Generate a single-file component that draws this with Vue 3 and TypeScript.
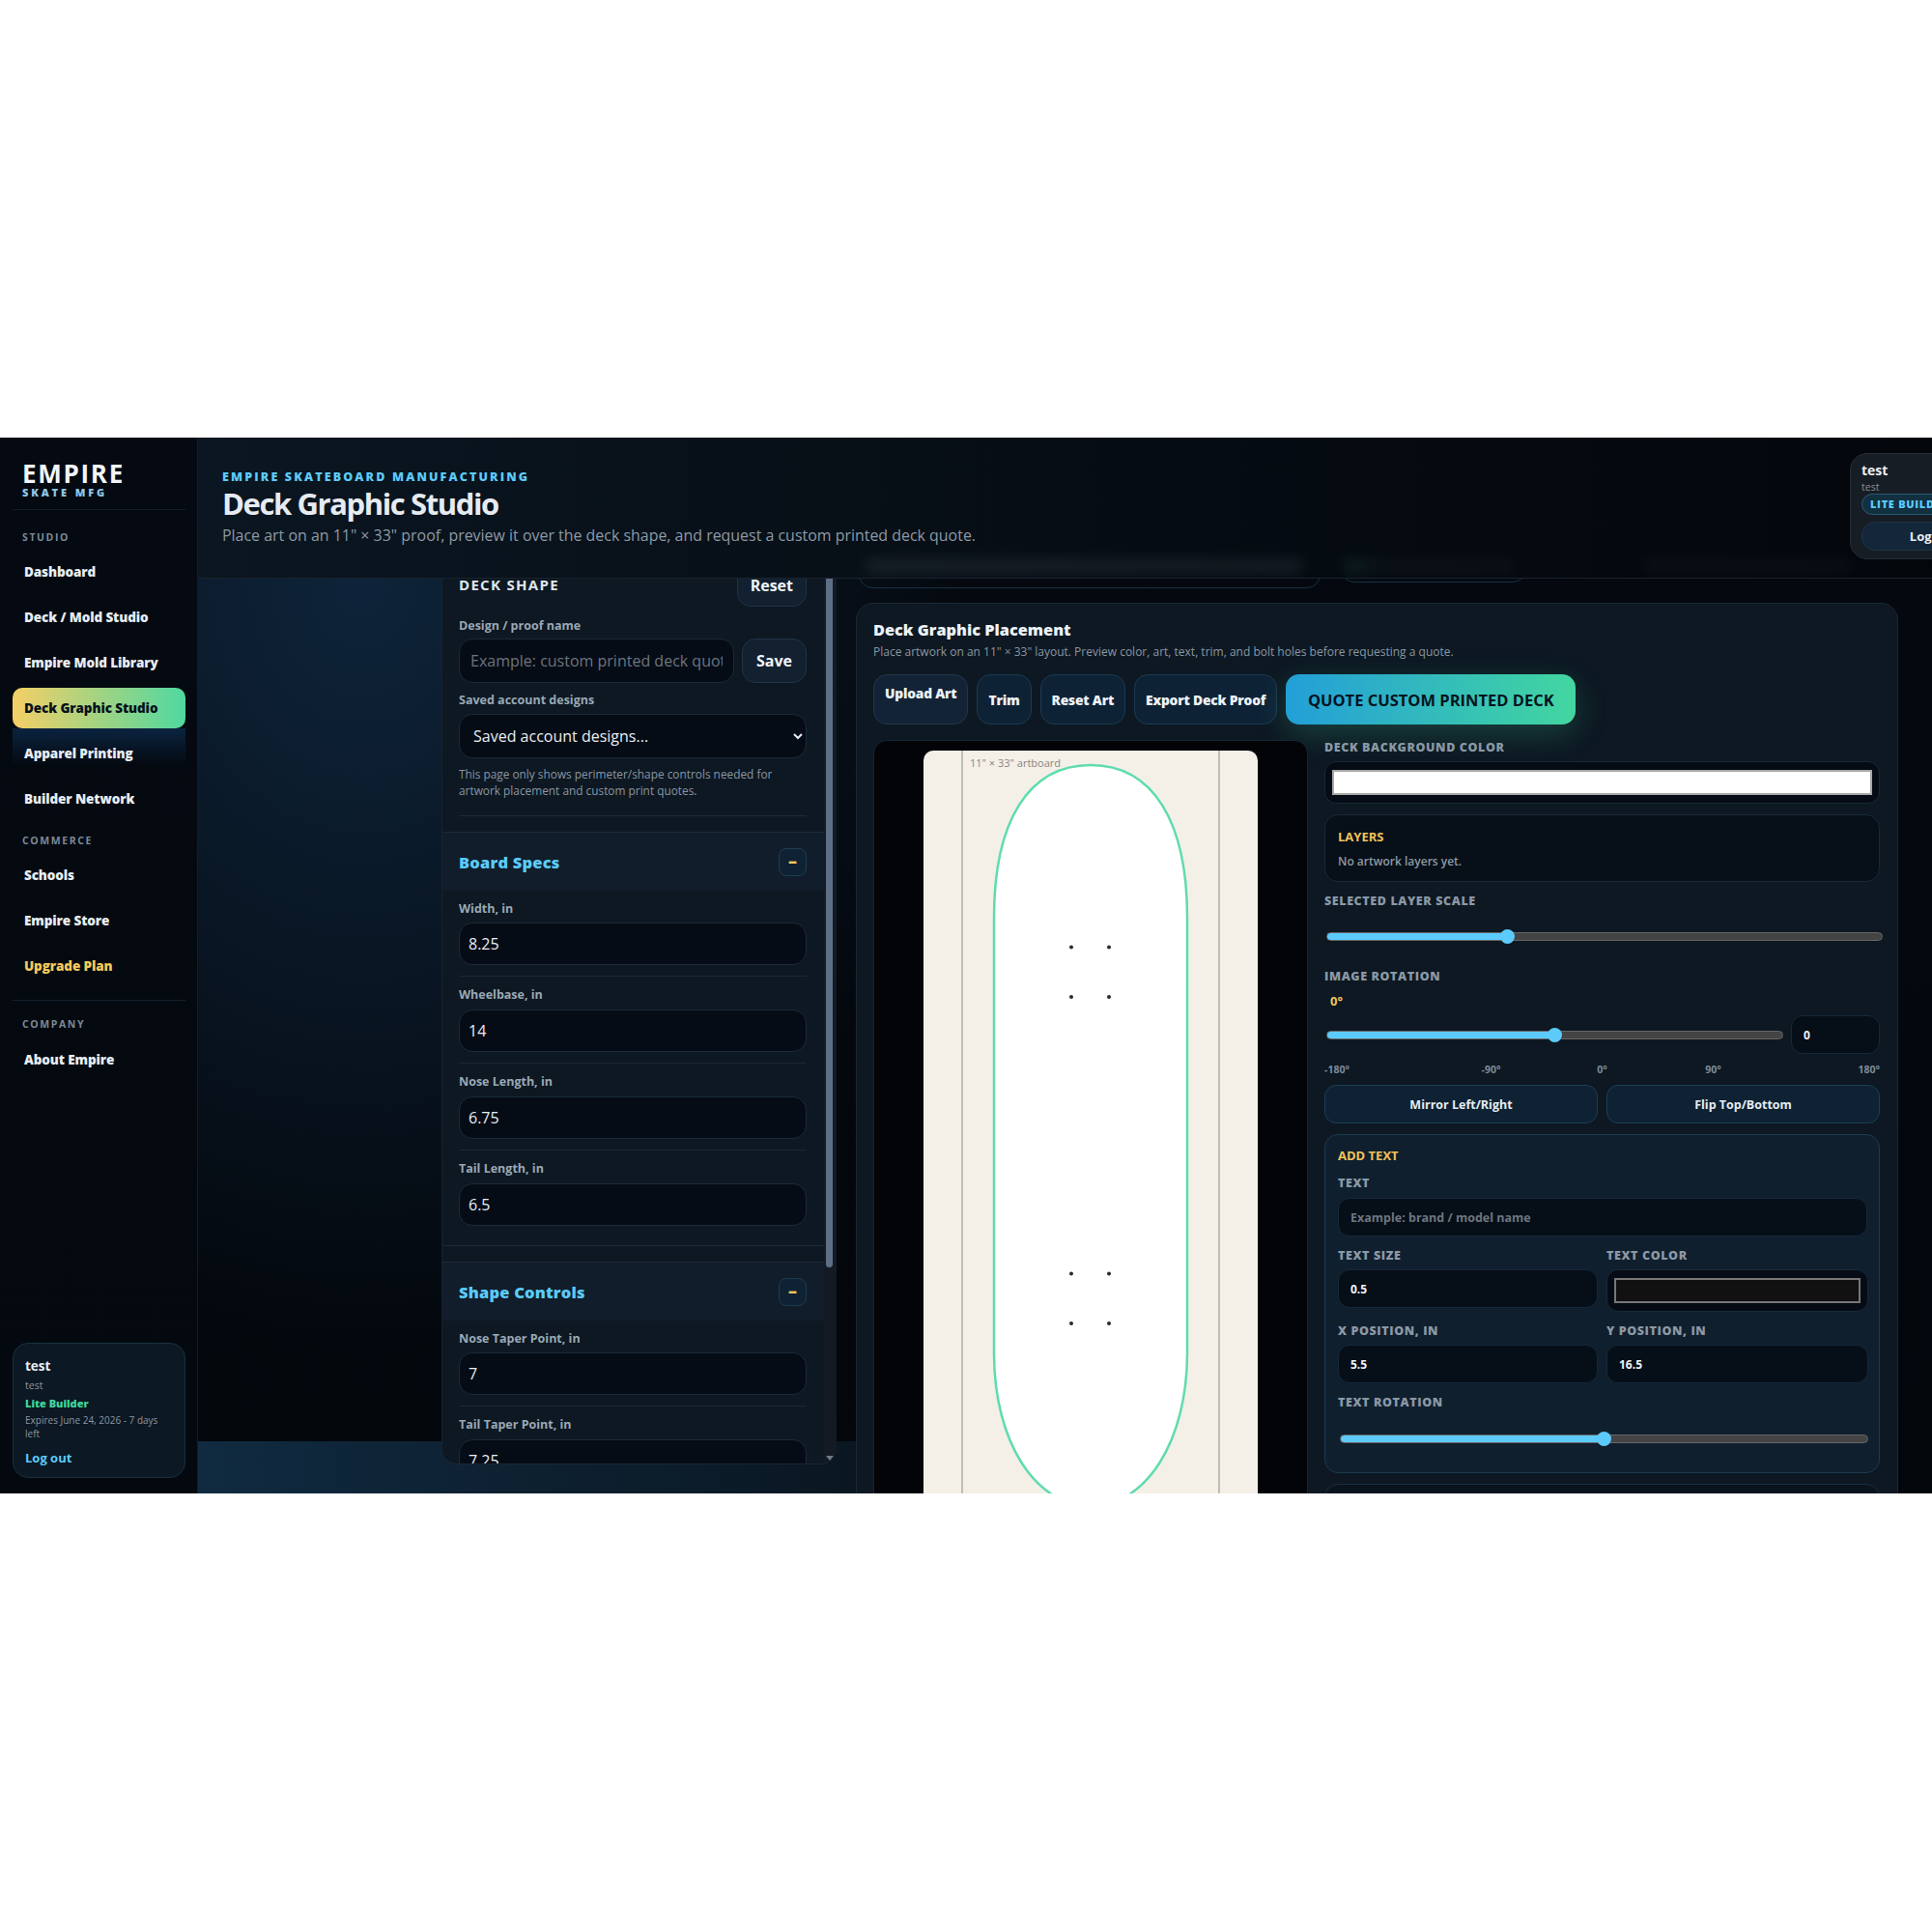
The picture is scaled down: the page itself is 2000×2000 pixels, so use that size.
<script setup lang="ts">
interface NavGroup {
  label: string
  items: Array<{ name: string; active?: boolean; upgrade?: boolean }>
}

const navGroups: NavGroup[] = [
  {
    label: 'STUDIO',
    items: [
      { name: 'Dashboard' },
      { name: 'Deck / Mold Studio' },
      { name: 'Empire Mold Library' },
      { name: 'Deck Graphic Studio', active: true },
      { name: 'Apparel Printing' },
      { name: 'Builder Network' }
    ]
  },
  {
    label: 'COMMERCE',
    items: [{ name: 'Schools' }, { name: 'Empire Store' }, { name: 'Upgrade Plan', upgrade: true }]
  }
]

const sections = [
  {
    title: 'Board Specs',
    fields: [
      { label: 'Width, in', value: '8.25' },
      { label: 'Wheelbase, in', value: '14' },
      { label: 'Nose Length, in', value: '6.75' },
      { label: 'Tail Length, in', value: '6.5' }
    ]
  },
  {
    title: 'Shape Controls',
    fields: [
      { label: 'Nose Taper Point, in', value: '7' },
      { label: 'Tail Taper Point, in', value: '7.25' }
    ]
  }
]

const actions = ['Upload Art', 'Trim', 'Reset Art', 'Export Deck Proof']
const ticks = ['-180°', '-90°', '0°', '90°', '180°']
const holes = [
  [1110, 979.5],
  [1149, 979.5],
  [1110, 1031],
  [1149, 1031],
  [1110, 1317.5],
  [1149, 1317.5],
  [1110, 1369],
  [1149, 1369]
]

function fill(pct: number) {
  return { '--fill': `${pct}%` }
}
</script>

<template>
  <div class="page">
    <div class="shell">
      <aside class="sidebar">
        <div class="brand">
          <div class="brand-name">EMPIRE</div>
          <div class="brand-sub">SKATE MFG</div>
        </div>
        <nav>
          <div v-for="g in navGroups" :key="g.label" class="nav-group">
            <div class="nav-label">{{ g.label }}</div>
            <a
              v-for="item in g.items"
              :key="item.name"
              class="nav-item"
              :class="{ active: item.active, upgrade: item.upgrade }"
            >{{ item.name }}</a>
          </div>
          <div class="nav-company">
            <div class="nav-label">COMPANY</div>
            <a class="nav-item">About Empire</a>
          </div>
        </nav>
        <div class="user-card">
          <div class="user-name">test</div>
          <div class="user-sub">test</div>
          <div class="user-plan">Lite Builder</div>
          <div class="user-exp">Expires June 24, 2026 - 7 days left</div>
          <a class="user-out">Log out</a>
        </div>
      </aside>

      <main class="main">
        <header class="topbar">
          <div class="eyebrow">EMPIRE SKATEBOARD MANUFACTURING</div>
          <h1>Deck Graphic Studio</h1>
          <p>Place art on an 11" × 33" proof, preview it over the deck shape, and request a custom printed deck quote.</p>
          <div class="smear smear-a"></div>
          <div class="smear smear-b"></div>
          <div class="smear smear-c"></div>
          <div class="account">
            <div class="account-name">test</div>
            <div class="account-sub">test</div>
            <div class="account-pill">LITE BUILDER</div>
            <button type="button" class="account-btn">Log out</button>
          </div>
        </header>

        <div class="workspace">
          <section class="shape-panel">
            <div class="shape-scroll">
              <div class="shape-top">
                <div class="shape-head">
                  <h2>DECK SHAPE</h2>
                  <button type="button" class="soft-btn">Reset</button>
                </div>
                <label class="field-label name-label">Design / proof name</label>
                <div class="name-row">
                  <input class="dark-input name-input" placeholder="Example: custom printed deck quote" />
                  <button type="button" class="soft-btn">Save</button>
                </div>
                <label class="field-label saved-label">Saved account designs</label>
                <select class="dark-input saved-select">
                  <option>Saved account designs...</option>
                </select>
                <div class="help">
                  <p>This page only shows perimeter/shape controls needed for artwork placement and custom print quotes.</p>
                </div>
              </div>

              <div v-for="s in sections" :key="s.title" class="spec-section">
                <div class="spec-head">
                  <h3>{{ s.title }}</h3>
                  <button type="button" class="collapse">–</button>
                </div>
                <div v-for="f in s.fields" :key="f.label" class="spec-field">
                  <label class="field-label">{{ f.label }}</label>
                  <input class="dark-input spec-input" :value="f.value" />
                </div>
              </div>
            </div>
            <div class="scrollbar">
              <div class="scroll-thumb"></div>
              <div class="scroll-arrow"></div>
            </div>
          </section>

          <div class="right-col">
            <div class="status-row">
              <div class="status-card status-a"></div>
              <div class="status-card status-b"></div>
            </div>
            <section class="placement">
              <h2>Deck Graphic Placement</h2>
              <p class="placement-sub">Place artwork on an 11" × 33" layout. Preview color, art, text, trim, and bolt holes before requesting a quote.</p>
              <div class="action-row">
                <button v-for="(a, i) in actions" :key="a" type="button" class="action-btn" :class="{ first: i === 0 }">{{ a }}</button>
                <button type="button" class="quote-btn">QUOTE CUSTOM PRINTED DECK</button>
              </div>

              <div class="placement-grid">
                <div class="preview">
                  <div class="artboard">
                    <svg class="art-svg" viewBox="957 776 346 770" width="346" height="770">
                      <line x1="997" y1="776" x2="997" y2="1546" stroke="#8f8b84" stroke-width="1" />
                      <line x1="1263" y1="776" x2="1263" y2="1546" stroke="#8f8b84" stroke-width="1" />
                      <text x="1005" y="793" class="art-label">11" × 33" artboard</text>
                      <path
                        d="M1030 949C1030 850 1065 791 1130 791C1195 791 1230 850 1230 949V1400C1230 1490 1188 1558 1130 1558C1072 1558 1030 1490 1030 1400Z"
                        fill="#fff"
                        stroke="#5fdcae"
                        stroke-width="2.5"
                      />
                      <circle v-for="(h, i) in holes" :key="i" :cx="h[0]" :cy="h[1]" r="2" fill="#2a2a2e" />
                    </svg>
                  </div>
                </div>

                <div class="controls">
                  <label class="caps">DECK BACKGROUND COLOR</label>
                  <div class="color-well"><div class="swatch swatch-white"></div></div>

                  <div class="layers">
                    <div class="gold">LAYERS</div>
                    <div class="layers-empty">No artwork layers yet.</div>
                  </div>

                  <label class="caps scale-label">SELECTED LAYER SCALE</label>
                  <input class="range scale-range" type="range" min="0" max="100" value="32" :style="fill(32.4)" />

                  <label class="caps rotation-label">IMAGE ROTATION</label>
                  <div class="gold rotation-value">0°</div>
                  <div class="rotation-row">
                    <input class="range" type="range" min="-180" max="180" value="0" :style="fill(50)" />
                    <input class="num-input rotation-num" value="0" />
                  </div>
                  <div class="ticks">
                    <span v-for="t in ticks" :key="t">{{ t }}</span>
                  </div>
                  <div class="mirror-row">
                    <button type="button" class="mirror-btn">Mirror Left/Right</button>
                    <button type="button" class="mirror-btn">Flip Top/Bottom</button>
                  </div>

                  <div class="add-text">
                    <div class="gold">ADD TEXT</div>
                    <label class="caps add-label">TEXT</label>
                    <input class="num-input wide" placeholder="Example: brand / model name" />
                    <div class="two-col">
                      <div>
                        <label class="caps">TEXT SIZE</label>
                        <input class="num-input" value="0.5" />
                      </div>
                      <div>
                        <label class="caps">TEXT COLOR</label>
                        <div class="color-well"><div class="swatch swatch-dark"></div></div>
                      </div>
                    </div>
                    <div class="two-col pos-row">
                      <div>
                        <label class="caps">X POSITION, IN</label>
                        <input class="num-input" value="5.5" />
                      </div>
                      <div>
                        <label class="caps">Y POSITION, IN</label>
                        <input class="num-input" value="16.5" />
                      </div>
                    </div>
                    <label class="caps text-rot-label">TEXT ROTATION</label>
                    <input class="range text-range" type="range" min="-180" max="180" value="0" :style="fill(50)" />
                  </div>

                  <div class="next-card"></div>
                </div>
              </div>
            </section>
          </div>
        </div>
      </main>
    </div>
  </div>
</template>

<style>
html,
body {
  background: #fff;
}
</style>

<style scoped>
.page {
  padding-top: 453px;
  height: 1547px;
  box-sizing: border-box;
  overflow: hidden;
  font-family: 'Open Sans', 'Noto Sans', sans-serif;
  color-scheme: dark;
}
.shell {
  display: flex;
  width: 2000px;
  height: 1093px;
  overflow: hidden;
  color: #e8edf3;
}
h1,
h2,
h3,
p {
  margin: 0;
}
button {
  font-family: inherit;
  cursor: pointer;
}
input,
select {
  font-family: inherit;
  box-sizing: border-box;
  outline: none;
}

/* sidebar */
.sidebar {
  width: 204px;
  flex: none;
  border-right: 1px solid #141c26;
  background: linear-gradient(180deg, #050a12, #04090f);
  display: flex;
  flex-direction: column;
}
.brand {
  margin: 0 12px 0 13px;
  padding: 24px 10px 14px;
  border-bottom: 1px solid #131b24;
  height: 75px;
  box-sizing: border-box;
}
.brand-name {
  font-size: 26px;
  line-height: 26px;
  font-weight: 700;
  letter-spacing: 1.7px;
  color: #f2f5f8;
}
.brand-sub {
  font-size: 11px;
  line-height: 11px;
  font-weight: 800;
  letter-spacing: 2.9px;
  color: #8fc7e6;
  margin-top: 1px;
}
nav {
  margin: 0 12px 0 13px;
}
.nav-label {
  font-size: 10.5px;
  line-height: 12px;
  font-weight: 700;
  letter-spacing: 1.6px;
  color: #7b8997;
  padding-left: 10px;
}
.nav-group:first-child {
  padding-top: 22px;
}
.nav-group:first-child .nav-label {
  margin-bottom: 9px;
}
.nav-group + .nav-group {
  padding-top: 11px;
}
.nav-group + .nav-group .nav-label {
  margin-bottom: 9px;
}
.nav-item {
  position: relative;
  display: flex;
  align-items: center;
  height: 42px;
  margin-bottom: 5px;
  padding-left: 12px;
  border-radius: 10px;
  font-size: 13.5px;
  font-weight: 800;
  letter-spacing: -0.1px;
  color: #e8edf3;
}
.nav-item.active {
  background: linear-gradient(90deg, #f5cf66, #4fd8a0);
  color: #07121c;
}
.nav-item.active::after {
  content: '';
  position: absolute;
  left: 0;
  right: 0;
  top: 100%;
  height: 38px;
  background: linear-gradient(180deg, #0b2340, rgba(11, 35, 64, 0));
}
.nav-item.upgrade {
  color: #f5c85c;
}
.nav-company {
  margin-top: 14px;
  border-top: 1px solid #13202d;
  padding-top: 18px;
}
.nav-company .nav-label {
  margin-bottom: 10px;
}
.user-card {
  margin: auto 12px 16px 13px;
  height: 140px;
  box-sizing: border-box;
  padding: 14px 12px 0 12px;
  border: 1px solid #17303f;
  border-radius: 16px;
  background: #0c1823;
}
.user-name {
  font-size: 13.5px;
  line-height: 18px;
  font-weight: 700;
}
.user-sub {
  font-size: 10.5px;
  line-height: 16px;
  margin-top: 3px;
  color: #8b96a0;
}
.user-plan {
  font-size: 11px;
  line-height: 15px;
  margin-top: 3px;
  font-weight: 800;
  color: #3fd69b;
}
.user-exp {
  font-size: 10px;
  line-height: 14px;
  margin-top: 3px;
  color: #8b96a0;
}
.user-out {
  display: block;
  margin-top: 9px;
  font-size: 13px;
  line-height: 18px;
  font-weight: 700;
  color: #5ccbfb;
}

/* main */
.main {
  width: 1795px;
  display: flex;
  flex-direction: column;
}
.topbar {
  position: relative;
  height: 146px;
  flex: none;
  box-sizing: border-box;
  padding: 33px 0 0 25px;
  border-bottom: 1px solid #1a222c;
  background: linear-gradient(90deg, #0a1621, #060c13 55%, #03070c);
  overflow: hidden;
}
.eyebrow {
  font-size: 12.5px;
  line-height: 16px;
  font-weight: 800;
  letter-spacing: 2.15px;
  color: #5ccbfb;
}
h1 {
  font-size: 31px;
  line-height: 38px;
  font-weight: 700;
  letter-spacing: -1.4px;
  color: #e6ebf1;
}
.topbar p {
  font-size: 15.95px;
  line-height: 22px;
  color: #8e99a5;
  margin-top: 3px;
}
.smear {
  position: absolute;
  bottom: 4px;
  height: 16px;
  border-radius: 8px;
  background: rgba(255, 255, 255, 0.07);
  filter: blur(7px);
}
.smear-a {
  left: 690px;
  width: 455px;
}
.smear-b {
  left: 1185px;
  width: 180px;
  background: linear-gradient(90deg, rgba(60, 200, 120, 0.12), rgba(255, 255, 255, 0.03) 20%);
}
.smear-c {
  left: 1495px;
  width: 220px;
  background: rgba(255, 255, 255, 0.03);
}
.account {
  position: absolute;
  left: 1710px;
  top: 16px;
  width: 172px;
  height: 110px;
  box-sizing: border-box;
  padding: 8px 11px 0;
  border: 1px solid #272e36;
  border-radius: 18px;
  background: #171d24;
}
.account-name {
  font-size: 14px;
  line-height: 18px;
  font-weight: 700;
}
.account-sub {
  font-size: 10.5px;
  line-height: 14px;
  margin-top: 1px;
  color: #8a8f95;
}
.account-pill {
  height: 22px;
  box-sizing: border-box;
  padding-left: 8px;
  border: 1px solid #2a5a78;
  border-radius: 11px;
  background: #12303f;
  font-size: 11px;
  line-height: 20px;
  font-weight: 800;
  letter-spacing: 0.7px;
  color: #5ccbfb;
  white-space: nowrap;
}
.account-btn {
  display: block;
  width: 148px;
  height: 30px;
  margin-top: 7px;
  border: 1px solid #1d3246;
  border-radius: 14px;
  background: #14273a;
  color: #e8edf3;
  font-size: 13px;
  font-weight: 700;
}

/* workspace */
.workspace {
  flex: 1;
  min-height: 0;
  overflow: hidden;
  display: flex;
  gap: 20px;
  padding: 0 35px 30px 252px;
  background:
    radial-gradient(ellipse 620px 800px at 170px 0, #0e243a, rgba(14, 36, 58, 0) 100%) 0 0 / 100% 893px no-repeat,
    linear-gradient(180deg, #05090f, #03070c) 0 0 / 100% 893px no-repeat,
    linear-gradient(90deg, #102a40, #0a1722 680px, #03070c 1760px);
}

/* shape panel */
.shape-panel {
  width: 409px;
  flex: none;
  display: flex;
  box-sizing: border-box;
  border-left: 1px solid #162230;
  border-bottom: 1px solid #1a2634;
  border-radius: 0 0 16px 16px;
  background: #0d1822;
  overflow: hidden;
}
.shape-scroll {
  width: 395px;
  flex: none;
  overflow: hidden;
}
.shape-top {
  margin-top: -15px;
  padding: 0 18px 0 17px;
}
.shape-head {
  display: flex;
  justify-content: space-between;
  align-items: center;
}
.shape-head h2 {
  font-size: 15px;
  font-weight: 700;
  letter-spacing: 1.3px;
  color: #dfe6ee;
  transform: translateY(-1px);
}
.soft-btn {
  height: 44px;
  padding: 0 13px;
  border: 1px solid #223346;
  border-radius: 14px;
  background: #122030;
  color: #f2f5f8;
  font-size: 16px;
  font-weight: 700;
}
.field-label {
  display: block;
  font-size: 12.5px;
  line-height: 16px;
  font-weight: 700;
  color: #9aa8b5;
}
.name-label {
  margin-top: 12px;
}
.name-row {
  display: flex;
  gap: 8px;
  margin-top: 5px;
}
.name-row .soft-btn {
  height: 46px;
  width: 67px;
  padding: 0;
}
.dark-input {
  border: 1px solid #1a2a3b;
  border-radius: 14px;
  background: #060c15;
  color: #e8edf3;
  font-size: 16px;
}
.dark-input::placeholder {
  color: #6b7480;
  opacity: 1;
}
.name-input {
  width: 285px;
  height: 46px;
  padding: 0 11px;
}
.saved-label {
  margin-top: 10px;
}
.saved-select {
  display: block;
  width: 360px;
  height: 46px;
  margin-top: 6px;
  padding: 0 10px;
}
.help {
  margin-top: 8px;
  padding-bottom: 17px;
  border-bottom: 1px solid #1b2a38;
}
.help p {
  max-width: 345px;
  font-size: 11.85px;
  line-height: 17px;
  color: #8a96a3;
}
.spec-section {
  margin-top: 16px;
  border-top: 1px solid #1b2a38;
  border-bottom: 1px solid #1b2a38;
  padding: 0 18px 0 17px;
}
.spec-head {
  display: flex;
  justify-content: space-between;
  align-items: center;
  height: 60px;
  margin: 0 -18px 0 -17px;
  padding: 0 18px 0 17px;
  background: #111d2a;
}
.spec-head h3 {
  font-size: 16.5px;
  font-weight: 800;
  letter-spacing: 0.2px;
  color: #5ccbfb;
}
.collapse {
  width: 29px;
  height: 29px;
  padding: 0 0 2px;
  border: 1px solid #1f3d52;
  border-radius: 8px;
  background: #0f2233;
  color: #f5c65c;
  font-size: 18px;
  line-height: 1;
  font-weight: 800;
}
.spec-field {
  padding: 11px 0 11px;
  border-bottom: 1px solid #1a2835;
}
.spec-field:last-child {
  padding-bottom: 20px;
  border-bottom: none;
}
.spec-input {
  display: block;
  width: 100%;
  height: 44px;
  margin-top: 7px;
  padding: 0 9px;
}
.spec-head + .spec-field .spec-input {
  margin-top: 6px;
}
.scrollbar {
  width: 13px;
  flex: none;
  position: relative;
  background: #141a24;
}
.scroll-thumb {
  width: 7px;
  height: 713px;
  margin-left: 2px;
  border-radius: 0 0 4px 4px;
  background: #5d6f85;
}
.scroll-arrow {
  position: absolute;
  left: 2px;
  bottom: 3px;
  border-left: 4px solid transparent;
  border-right: 4px solid transparent;
  border-top: 5px solid #6f7a88;
}

/* placement */
.right-col {
  width: 1079px;
  flex: none;
}
.status-row {
  display: flex;
  height: 10px;
  margin-top: -30px;
  padding-top: 30px;
  position: relative;
}
.status-card {
  position: absolute;
  bottom: 0;
  height: 40px;
  box-sizing: border-box;
  border: 1px solid #143047;
  border-radius: 14px;
}
.status-a {
  left: 3px;
  width: 478px;
}
.status-b {
  left: 502px;
  width: 192px;
  bottom: 6px;
}
.placement {
  margin-top: 15px;
  height: 940px;
  box-sizing: border-box;
  padding: 17px 20px 0 17px;
  border: 1px solid #1a2836;
  border-radius: 18px;
  background: #0d1822;
}
.placement h2 {
  font-size: 16.3px;
  line-height: 20px;
  font-weight: 800;
  color: #eef2f6;
}
.placement-sub {
  font-size: 12px;
  line-height: 16px;
  margin-top: 5px;
  color: #8a97a4;
}
.action-row {
  display: flex;
  gap: 9px;
  margin-top: 15px;
}
.action-btn {
  height: 52px;
  padding: 0 11px;
  border: 1px solid #1b3a52;
  border-radius: 14px;
  background: #0e2236;
  color: #eef2f6;
  font-size: 13.8px;
  font-weight: 800;
  letter-spacing: -0.2px;
}
.action-btn.first {
  padding: 0 11px 13px;
  background: #132336;
  border-color: #22354a;
}
.quote-btn {
  height: 52px;
  width: 300px;
  padding: 0;
  border: none;
  border-radius: 14px;
  background: linear-gradient(90deg, #229fd8, #43d6a0);
  color: #04141f;
  font-size: 16.5px;
  font-weight: 700;
  box-shadow: 0 10px 32px rgba(67, 214, 160, 0.22);
}
.placement-grid {
  display: flex;
  gap: 17px;
  margin-top: 16px;
}
.preview {
  width: 450px;
  height: 900px;
  flex: none;
  box-sizing: border-box;
  padding: 10px 0 0 51px;
  border: 1px solid #162535;
  border-radius: 14px;
  background: #020408;
}
.artboard {
  width: 346px;
  height: 890px;
  background: #f4f0e8;
  border-radius: 10px 10px 0 0;
  overflow: hidden;
}
.art-svg {
  display: block;
  overflow: visible;
}
.art-label {
  font-family: 'Open Sans', sans-serif;
  font-size: 11px;
  fill: #888580;
}
.controls {
  width: 575px;
  flex: none;
}
.caps {
  display: block;
  font-size: 12.5px;
  line-height: 16px;
  font-weight: 800;
  letter-spacing: 0.6px;
  color: #8b98a5;
  margin-bottom: 6px;
}
.color-well {
  height: 44px;
  box-sizing: border-box;
  padding: 8px 7px;
  border: 1px solid #182838;
  border-radius: 12px;
  background: #060c15;
}
.swatch {
  height: 26px;
  box-sizing: border-box;
  border: 2px solid #a8a8a8;
}
.swatch-white {
  background: #fff;
}
.swatch-dark {
  background: #111;
  border-color: #777;
}
.layers {
  height: 70px;
  margin-top: 11px;
  box-sizing: border-box;
  padding: 14px 13px 0;
  border: 1px solid #16293a;
  border-radius: 14px;
  background: #070f18;
}
.gold {
  font-size: 13px;
  line-height: 16px;
  font-weight: 700;
  color: #f0c35a;
}
.layers-empty {
  font-size: 12px;
  line-height: 16px;
  margin-top: 10px;
  font-weight: 600;
  color: #8d99a5;
}
.scale-label {
  margin: 12px 0 0;
}
.range {
  -webkit-appearance: none;
  appearance: none;
  display: block;
  margin: 0;
  height: 16px;
  background: transparent;
}
.range::-webkit-slider-runnable-track {
  height: 9px;
  box-sizing: border-box;
  border: 1px solid #666;
  border-radius: 5px;
  background: linear-gradient(90deg, #5ccbfb var(--fill), #444 var(--fill));
}
.range::-webkit-slider-thumb {
  -webkit-appearance: none;
  width: 15px;
  height: 15px;
  margin-top: -4px;
  border-radius: 50%;
  background: #5ccbfb;
}
.scale-range {
  width: 576px;
  margin: 20px 0 0 2px;
}
.rotation-label {
  margin: 26px 0 0;
}
.rotation-value {
  margin: 9px 0 0 6px;
}
.rotation-row {
  display: flex;
  align-items: center;
  gap: 8px;
  margin-top: 7px;
}
.rotation-row .range {
  width: 473px;
  margin-left: 2px;
}
.num-input {
  width: 100%;
  height: 40px;
  padding: 0 12px;
  border: 1px solid #15283a;
  border-radius: 12px;
  background: #060e17;
  color: #f0f4f8;
  font-size: 12px;
  font-weight: 700;
  display: block;
}
.num-input::placeholder {
  color: #6e7680;
  opacity: 1;
}
.num-input.wide {
  font-size: 12.5px;
}
.rotation-num {
  width: 92px;
}
.ticks {
  display: grid;
  grid-template-columns: repeat(5, 1fr);
  text-align: center;
  margin-top: 8px;
  font-size: 10.5px;
  line-height: 16px;
  font-weight: 700;
  color: #7f8b98;
}
.ticks span:first-child {
  text-align: left;
}
.ticks span:last-child {
  text-align: right;
}
.mirror-row {
  display: flex;
  gap: 9px;
  margin-top: 8px;
}
.mirror-btn {
  flex: 1;
  height: 40px;
  border: 1px solid #1c3e58;
  border-radius: 12px;
  background: #0e2233;
  color: #e6ecf2;
  font-size: 12.5px;
  font-weight: 700;
}
.add-text {
  margin-top: 11px;
  height: 351px;
  box-sizing: border-box;
  padding: 13px 12px 0 13px;
  border: 1px solid #1b3a50;
  border-radius: 14px;
  background: #101f2e;
}
.add-label {
  margin: 13px 0 7px;
}
.two-col {
  display: grid;
  grid-template-columns: 269px 271px;
  gap: 9px;
  margin-top: 12px;
}
.pos-row {
  margin-top: 12px;
}
.text-rot-label {
  margin: 12px 0 0;
}
.text-range {
  width: 547px;
  margin: 21px 0 0 2px;
}
.next-card {
  margin-top: 11px;
  height: 80px;
  border: 1px solid #1a2f42;
  border-radius: 14px;
  background: #0a141e;
}
</style>
